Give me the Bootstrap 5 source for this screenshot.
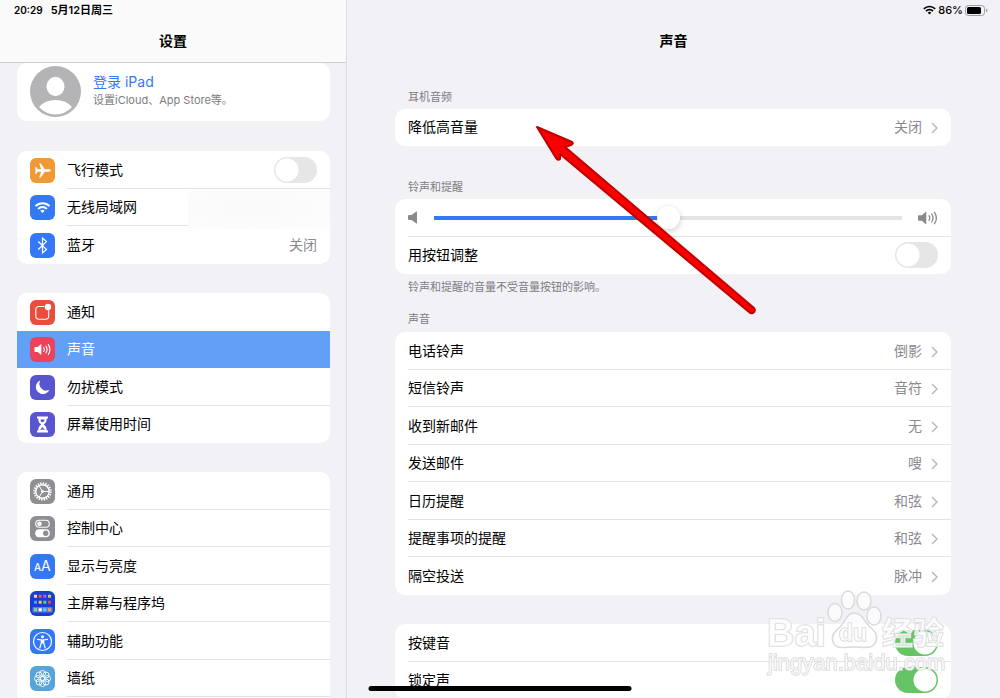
<!DOCTYPE html>
<html lang="zh-CN">
<head>
<meta charset="utf-8">
<meta name="viewport" content="width=device-width, initial-scale=1">
<title>设置</title>
<link href="https://cdn.jsdelivr.net/npm/bootstrap@5.3.0/dist/css/bootstrap.min.css" rel="stylesheet">
<style>
  body { font-family: Inter, "Noto Sans CJK SC", sans-serif; font-size: 14px; line-height: 20px; color: #000; background: #f2f1f6; }
  a { color: inherit; text-decoration: none; }
  h1 { font-size: 14px; line-height: 20px; padding-top: 11px; }
  .side { flex: 0 0 35%; max-width: 347px; border-right: 1px solid #dcdbe0; }
  .topbar { height: 63px; }
  .side .topbar { background: #fafafb; border-bottom: 1px solid #cdcdd1; }
  .status { height: 20px; font-size: 11px; font-weight: 600; }
  .status-left { padding-left: 14px; }
  .status-right { padding-right: 12px; gap: 2px; }
  .clock { font-size: 10px; }
  .side-body { padding: 0 16px 0 17px; }
  .group { background: #fff; border-radius: 10px; overflow: hidden; }
  .side .group + .group { margin-top: 29px; }
  .item { display: flex; height: 38px; padding-left: 13px; gap: 12px; align-items: center; position: relative; }
  .item:nth-child(even) { height: 37px; }
  .item-main { flex: 1; height: 100%; display: flex; align-items: center; justify-content: space-between; padding-right: 13px; border-bottom: 1px solid #e3e3e5; }
  .item:last-child .item-main, .item.plain .item-main { border-bottom-color: transparent; }
  .item.chosen { background: #629ff7; color: #fff; }
  .item.chosen .item-main { border-bottom-color: transparent; }
  .tile { width: 25px; height: 25px; flex: none; border-radius: 6px; }
  .orange { background: #f09a37; } .blue { background: #3478f6; } .red { background: #eb4d3d; }
  .pink { background: #eb445a; } .indigo { background: #5856ce; } .gray { background: #8e8e93; }
  .navy { background: #1a3fcf; } .sky { background: #57a5d8; }
  .val { color: #8a8a8e; }
  .side .account.group { height: 58px; padding: 0 13px 2px; gap: 12px; }
  .side .account.group + .group { margin-top: 30px; }
  .account-name { color: #3478f6; }
  .account-text { padding-bottom: 2px; }
  .small-note { font-size: 11px; line-height: 16px; color: #7d7d82; }
  .smudge { position: absolute; right: 0; top: 2px; width: 142px; height: 38px; background: radial-gradient(ellipse at 45% 45%, #f9f9f9, #fcfcfc 80%); }
  .switch.form-check-input { width: 43px; height: 26px; margin: 0; flex: none; border: 0; border-radius: 13px; background: #e6e6e7 radial-gradient(circle, #fff 11px, transparent 12px) no-repeat 0 0 / 26px 26px; box-shadow: none; }
  .switch.form-check-input:checked { background: #65c466 radial-gradient(circle, #fff 11px, transparent 12px) no-repeat 100% 0 / 26px 26px; }
  .detail { min-width: 0; }
  .detail-body { padding: 26px 49px 0 48px; }
  .detail .group + .small-note { margin-top: 33px; }
  .detail .group + .small-note.foot { margin-top: 5px; }
  .detail .group + .group { margin-top: 29px; }
  .caption { padding: 0 13px; margin-bottom: 4px; }
  .foot + .caption { margin-top: 16px; margin-bottom: 5px; }
  .single .item { height: 37px; }
  .chev { width: 7px; height: 12px; margin-left: 9px; }
  .vol { flex: 1; min-width: 0; height: 23px; margin: 0; appearance: none; background: linear-gradient(90deg, #3478f6 50%, #e4e4e6 50%) no-repeat center / 100% 4px; }
  .vol::-webkit-slider-thumb { appearance: none; width: 23px; height: 23px; border-radius: 50%; background: #fff; box-shadow: 0 2px 6px rgba(0,0,0,.2); }
  .pointer { position: absolute; left: 181px; top: 118px; pointer-events: none; }
  .stamp { position: fixed; right: 50px; bottom: 18px; pointer-events: none; }
  .stamp text { font-family: "Liberation Sans", "Noto Sans CJK SC", sans-serif; paint-order: stroke; }
  .home { position: fixed; left: 50%; bottom: 7px; width: 263px; height: 5px; transform: translateX(-50%); border-radius: 3px; background: #000; }
</style>
</head>
<body>
<svg class="d-none" aria-hidden="true">
  <symbol id="chev" viewBox="0 0 7 12"><path d="M1 1l5 5-5 5" fill="none" stroke="#b9b9bd" stroke-width="1.5"/></symbol>
  <symbol id="wifi" viewBox="0 0 16 12"><g fill="none" stroke="currentColor" stroke-width="2"><path d="M1 4.600a10 10 0 0 1 14 0M3.600 7.400a6.200 6.200 0 0 1 8.800 0"/></g><path d="M5.800 9.300a3.200 3.200 0 0 1 4.400 0L8 11.600z" fill="currentColor"/></symbol>
  <symbol id="loud" viewBox="0 0 20 14"><path d="M0 5q0-.8.8-.8H4L7.500 1q.8-.5.8.4v11.200q0 .9-.8.4L4 9.800H.8Q0 9.800 0 9z" fill="currentColor"/><g fill="none" stroke="currentColor" stroke-width="1.300" stroke-linecap="round"><path d="M11 4.700q1.500 2.300 0 4.600M13.700 3q2.700 4 0 8M16.500 1.300q3.800 5.700 0 11.400"/></g></symbol>
</svg>
<div class="d-flex vh-100 overflow-hidden">
  <nav class="side overflow-hidden" aria-label="设置">
    <header class="topbar">
      <div class="status status-left d-flex align-items-center gap-2"><span class="clock">20:29</span><span>5月12日周三</span></div>
      <h1 class="text-center fw-bold mb-0">设置</h1>
    </header>
    <div class="side-body">
      <a href="#account" class="group account d-flex align-items-center">
        <svg width="51" height="51" viewBox="0 0 51 51" aria-hidden="true"><circle cx="25.500" cy="25.500" r="25.500" fill="#b4b4b6"/><ellipse cx="25.500" cy="20.500" rx="9" ry="9.700" fill="#fff"/><path d="M9 41q6-7 16.500-7T42 41q-7 7.500-16.500 7.500T9 41z" fill="#fff"/></svg>
        <div class="account-text"><div class="account-name">登录 iPad</div><div class="small-note">设置iCloud、App Store等。</div></div>
      </a>
      <div class="group">
        <label class="item"><svg class="tile orange" viewBox="0 0 25 25"><path d="M20.800 12.500c0 .8-1 1.200-2 1.200h-4l-4 5.800H9.200l2-5.800H7.800L6.300 15.800H4.900l.8-3.300-.8-3.300h1.400l1.500 2.100h3.400l-2-5.800h1.600l4 5.800h4c1 0 2 .4 2 1.200z" fill="#fff"/></svg><span class="item-main">飞行模式<input class="form-check-input switch" type="checkbox" role="switch"></span></label>
        <a href="#wlan" class="item"><svg class="tile blue text-white" viewBox="0 0 25 25"><use href="#wifi" x="4.500" y="6.500" width="16" height="12"/></svg><span class="item-main">无线局域网</span><span class="smudge"></span></a>
        <a href="#bluetooth" class="item"><svg class="tile blue" viewBox="0 0 25 25"><path d="M8.300 8.500l8.200 8-4 3.500V5l4 3.500-8.200 8" fill="none" stroke="#fff" stroke-width="1.200"/></svg><span class="item-main">蓝牙<span class="val">关闭</span></span></a>
      </div>
      <div class="group">
        <a href="#notice" class="item plain"><svg class="tile red" viewBox="0 0 25 25"><path d="M14.500 6.500H9Q5.800 6.500 5.800 9.500v6.500q0 3.200 3.200 3.200h6.500q3.200 0 3.200-3.200V10.500" fill="none" stroke="#fff" stroke-width="1.100"/><circle cx="18" cy="7" r="3.200" fill="#fff"/></svg><span class="item-main">通知</span></a>
        <a href="#sound" class="item chosen" aria-current="page"><svg class="tile pink text-white" viewBox="0 0 25 25"><use href="#loud" x="4.300" y="6.500" width="17" height="12"/></svg><span class="item-main">声音</span></a>
        <a href="#dnd" class="item"><svg class="tile indigo" viewBox="0 0 25 25"><path d="M10.300 5.500a7 7 0 1 0 9 9.300 6.800 6.800 0 0 1-9-9.300z" fill="#fff"/></svg><span class="item-main">勿扰模式</span></a>
        <a href="#time" class="item"><svg class="tile indigo" viewBox="0 0 25 25"><path d="M7 4.500h11v2h-1.300c0 3-.7 4.500-2.900 6 2.200 1.500 2.900 3 2.900 6H18v2H7v-2h1.300c0-3 .7-4.500 2.900-6-2.200-1.500-2.900-3-2.900-6H7z" fill="#fff"/><path d="M10.500 7.500h4q0 1.500-1 2.500h-2q-1-1-1-2.500zM12.500 15l2.500 3q-2.500-1-5 0z" fill="#5856ce"/></svg><span class="item-main">屏幕使用时间</span></a>
      </div>
      <div class="group">
        <a href="#general" class="item"><svg class="tile gray" viewBox="0 0 25 25"><g fill="none" stroke="#fff"><circle cx="12.500" cy="12.500" r="8.200" stroke-width="2" stroke-dasharray="1.400 1.176"/><circle cx="12.500" cy="12.500" r="6.700" stroke-width="1.400"/><path d="M12.500 12.500h6.500M12.500 12.500L9.200 6.900M12.500 12.500l-3.300 5.600" stroke-width="1"/><circle cx="12.500" cy="12.500" r="1.400" fill="#fff" stroke="none"/></g></svg><span class="item-main">通用</span></a>
        <a href="#control" class="item"><svg class="tile gray" viewBox="0 0 25 25"><rect x="5.700" y="4.200" width="13.600" height="7" rx="3.500" fill="none" stroke="#fff" stroke-width="1.100"/><circle cx="9.400" cy="7.700" r="2.300" fill="#fff"/><rect x="5.200" y="13.200" width="14.600" height="8" rx="4" fill="#fff"/><circle cx="15.700" cy="17.200" r="2.700" fill="#8e8e93"/></svg><span class="item-main">控制中心</span></a>
        <a href="#display" class="item"><svg class="tile blue" viewBox="0 0 25 25"><g fill="#fff" font-family="Inter, sans-serif"><text x="4" y="17" font-size="10" font-weight="500">A</text><text x="11" y="17" font-size="14">A</text></g></svg><span class="item-main">显示与亮度</span></a>
        <a href="#homescreen" class="item"><svg class="tile navy" viewBox="0 0 25 25"><rect x="2.500" y="16" width="20" height="5.500" rx="1" fill="#5c7ce6"/><g stroke-width="3"><path d="M4 5.300h3" stroke="#f6d5b0"/><path d="M8.700 5.300h3" stroke="#f25a5a"/><path d="M13.300 5.300h3" stroke="#b05cf0"/><path d="M18 5.300h3" stroke="#b9d84a"/><path d="M4 11.300h3" stroke="#4aa8f0"/><path d="M8.700 11.300h3" stroke="#f5c542"/><path d="M13.300 11.300h3" stroke="#5fd07a"/><path d="M18 11.300h3" stroke="#e8445a"/><path d="M4 18.700h3" stroke="#7de27a"/><path d="M8.700 18.700h3" stroke="#fff"/><path d="M13.300 18.700h3" stroke="#6cc8f8"/><path d="M18 18.700h3" stroke="#f5a04a"/></g></svg><span class="item-main">主屏幕与程序坞</span></a>
        <a href="#access" class="item"><svg class="tile blue" viewBox="0 0 25 25"><circle cx="12.500" cy="12.500" r="9" fill="none" stroke="#fff" stroke-width="1.200"/><circle cx="12.500" cy="7.700" r="1.500" fill="#fff"/><path d="M7.500 10.300l3.800.7v3l-1.500 5M17.500 10.300l-3.800.7v3l1.500 5" fill="none" stroke="#fff" stroke-width="1.200" stroke-linecap="round"/><path d="M11 10.500h3v4h-3z" fill="#fff"/></svg><span class="item-main">辅助功能</span></a>
        <a href="#wallpaper" class="item"><svg class="tile sky" viewBox="0 0 25 25"><g fill="none" stroke="#fff" stroke-width=".9"><circle cx="12.500" cy="12.500" r="2.200"/><circle cx="12.500" cy="7.500" r="3"/><circle cx="16" cy="9" r="3"/><circle cx="17.500" cy="12.500" r="3"/><circle cx="16" cy="16" r="3"/><circle cx="12.500" cy="17.500" r="3"/><circle cx="9" cy="16" r="3"/><circle cx="7.500" cy="12.500" r="3"/><circle cx="9" cy="9" r="3"/></g></svg><span class="item-main">墙纸</span></a>
        <div class="item"></div>
      </div>
    </div>
  </nav>

  <main class="detail flex-grow-1 position-relative overflow-hidden">
    <header class="topbar">
      <div class="status status-right d-flex align-items-center justify-content-end">
        <svg width="13" height="10" aria-hidden="true"><use href="#wifi"/></svg><span class="fw-medium">86%</span>
        <svg width="23" height="11" viewBox="0 0 23 11" aria-hidden="true"><rect x=".5" y=".5" width="19" height="10" rx="3" fill="none" stroke="#9c9ca0"/><rect x="2" y="2" width="14" height="7" rx="1.500"/><path d="M21 3.800q1.500.5 1.500 1.700T21 7.200z" fill="#9c9ca0"/></svg>
      </div>
      <h1 class="text-center fw-bold mb-0">声音</h1>
    </header>
    <div class="detail-body">
      <div class="small-note caption">耳机音频</div>
      <div class="group single">
        <a href="#reduce" class="item"><span class="item-main">降低高音量<span class="val">关闭<svg class="chev"><use href="#chev"/></svg></span></span></a>
      </div>
      <div class="small-note caption">铃声和提醒</div>
      <div class="group">
        <div class="item"><div class="item-main">
          <svg class="val me-3" width="10" height="13" viewBox="0 0 10 13" aria-hidden="true"><path d="M0 5q0-1 1-1h2.500L8 .7q1-.6 1 .5v10.600q0 1.100-1 .5L3.500 9H1Q0 9 0 8z" fill="currentColor"/></svg>
          <input class="vol" type="range" min="0" max="100" value="50" aria-label="铃声和提醒音量">
          <svg class="val ms-3" width="20" height="14" aria-hidden="true"><use href="#loud"/></svg>
        </div></div>
        <label class="item"><span class="item-main">用按钮调整<input class="form-check-input switch" type="checkbox" role="switch"></span></label>
      </div>
      <div class="small-note caption foot">铃声和提醒的音量不受音量按钮的影响。</div>
      <div class="small-note caption">声音</div>
      <div class="group">
        <a href="#s1" class="item"><span class="item-main">电话铃声<span class="val">倒影<svg class="chev"><use href="#chev"/></svg></span></span></a>
        <a href="#s2" class="item"><span class="item-main">短信铃声<span class="val">音符<svg class="chev"><use href="#chev"/></svg></span></span></a>
        <a href="#s3" class="item"><span class="item-main">收到新邮件<span class="val">无<svg class="chev"><use href="#chev"/></svg></span></span></a>
        <a href="#s4" class="item"><span class="item-main">发送邮件<span class="val">嗖<svg class="chev"><use href="#chev"/></svg></span></span></a>
        <a href="#s5" class="item"><span class="item-main">日历提醒<span class="val">和弦<svg class="chev"><use href="#chev"/></svg></span></span></a>
        <a href="#s6" class="item"><span class="item-main">提醒事项的提醒<span class="val">和弦<svg class="chev"><use href="#chev"/></svg></span></span></a>
        <a href="#s7" class="item"><span class="item-main">隔空投送<span class="val">脉冲<svg class="chev"><use href="#chev"/></svg></span></span></a>
      </div>
      <div class="group">
        <label class="item"><span class="item-main">按键音<input class="form-check-input switch" type="checkbox" role="switch" checked></span></label>
        <label class="item"><span class="item-main">锁定声<input class="form-check-input switch" type="checkbox" role="switch" checked></span></label>
      </div>
    </div>
    <svg class="pointer" width="240" height="205" viewBox="528 118 240 205" aria-hidden="true"><path d="M537 127L572 142Q574 144 571 145L565 147L754 308Q756 311 753 313Q751 314 749 312L560 154L560 159Q558 161 556 158Z" fill="#f80000" stroke="#c00000" stroke-width="2" stroke-linejoin="round"/></svg>
  </main>
</div>
<svg class="stamp" width="186" height="92" viewBox="764 588 186 92">
  <g fill="#fff" fill-opacity=".7" stroke="#dadadd" stroke-width="1.500">
    <ellipse cx="835" cy="612.500" rx="7" ry="9"/><ellipse cx="848" cy="600" rx="6.500" ry="9"/><ellipse cx="864" cy="601" rx="7" ry="9"/><ellipse cx="874" cy="616" rx="7" ry="9"/>
    <path d="M854 613c8 0 10 8 15 13 6 5 9 9 7 15-3 9-12 6-22 6s-18 3-21-5c-2-6 1-10 7-15 6-6 7-14 14-14z"/>
    <g font-weight="700">
      <text x="767" y="646" font-size="38">Bai</text>
      <text x="839" y="641" font-size="23">du</text>
      <text x="882" y="644" font-size="31">经验</text>
    </g>
    <text x="768" y="670" font-size="22">jingyan.baidu.com</text>
  </g>
</svg>
<div class="home"></div>
<script src="https://cdn.jsdelivr.net/npm/bootstrap@5.3.0/dist/js/bootstrap.bundle.min.js"></script>
</body>
</html>
